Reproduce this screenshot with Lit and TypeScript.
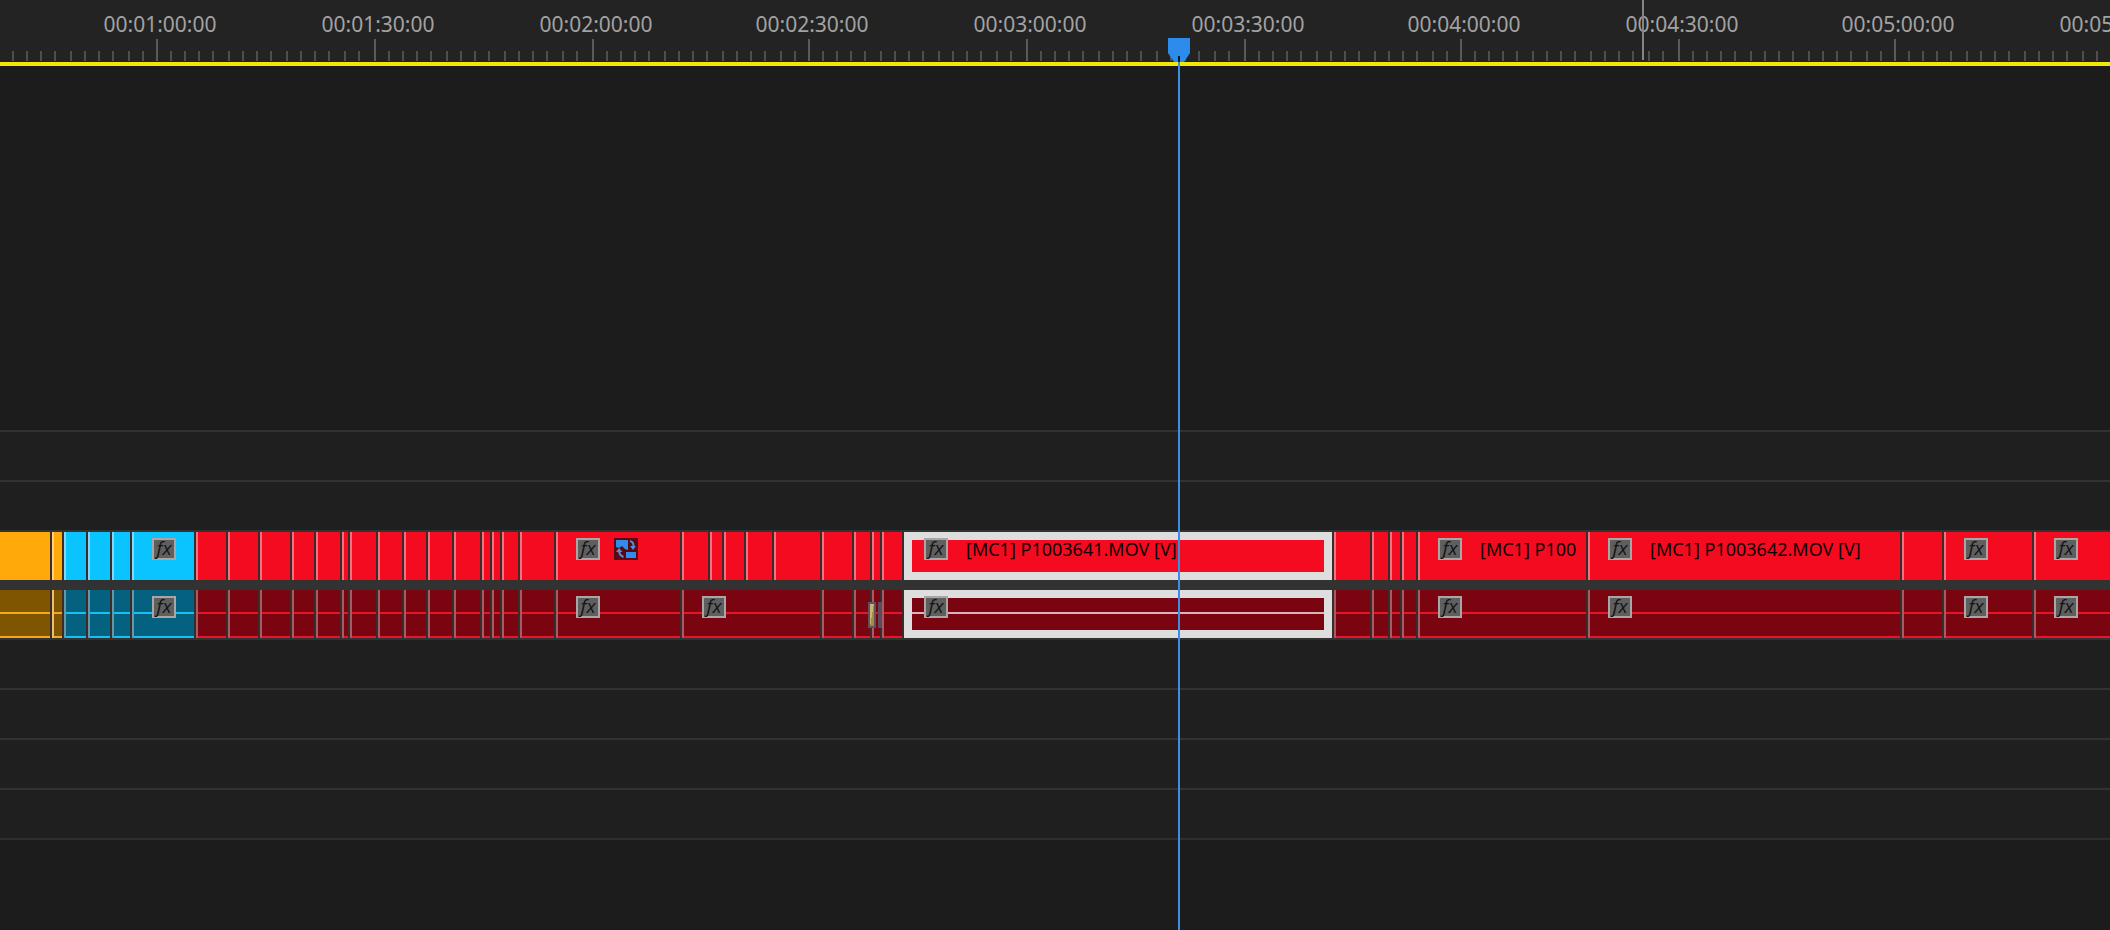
import { LitElement, html, svg, css, nothing } from "lit";
import { customElement, property } from "lit/decorators.js";
import { styleMap } from "lit/directives/style-map.js";

type Tone = "amber" | "cyan" | "red";

interface Clip {
  width: number; // 0 = takes the rest of the track
  tone: Tone;
  fx?: boolean;
  nested?: boolean;
  title?: string;
  selected?: boolean;
  continued?: boolean;
}

const clip = (width: number, tone: Tone, extra: Partial<Clip> = {}): Clip => ({ width, tone, ...extra });
const reds = (...widths: number[]): Clip[] => widths.map((w) => clip(w, "red"));

const OPENING: Clip[] = [
  clip(52, "amber", { continued: true }),
  clip(12, "amber"),
  clip(24, "cyan"),
  clip(24, "cyan"),
  clip(20, "cyan"),
  clip(64, "cyan", { fx: true }),
  ...reds(32, 32, 32, 24, 26, 8, 28, 26, 24, 26, 28, 10, 10, 18, 36),
];

const VIDEO: Clip[] = [
  ...OPENING,
  clip(126, "red", { fx: true, nested: true }),
  ...reds(28, 14, 22, 28, 48, 32, 18, 10, 22),
  clip(430, "red", { fx: true, selected: true, title: "[MC1] P1003641.MOV [V]" }),
  ...reds(38, 18, 12, 16),
  clip(170, "red", { fx: true, title: "[MC1] P100" }),
  clip(314, "red", { fx: true, title: "[MC1] P1003642.MOV [V]" }),
  ...reds(42),
  clip(90, "red", { fx: true }),
  clip(0, "red", { fx: true }),
];

const AUDIO: Clip[] = [
  ...OPENING,
  clip(126, "red", { fx: true }),
  clip(140, "red", { fx: true }),
  ...reds(32, 18, 10, 22),
  clip(430, "red", { fx: true, selected: true }),
  ...reds(38, 18, 12, 16),
  clip(170, "red", { fx: true }),
  clip(314, "red", { fx: true }),
  ...reds(42),
  clip(90, "red", { fx: true }),
  clip(0, "red", { fx: true }),
];

const PX_PER_MARK = 217.25;
const FIRST_MARK = 156.8;
const MINOR_PER_MARK = 15;

const pad = (n: number) => String(n).padStart(2, "0");
const timecode = (seconds: number) => `00:${pad(Math.floor(seconds / 60))}:${pad(seconds % 60)}:00`;

@customElement("time-ruler")
export class TimeRuler extends LitElement {
  static styles = css`
    :host {
      display: block;
      position: relative;
      height: 62px;
      overflow: hidden;
      background: #232323;
      border-bottom: 4px solid #f3e708;
    }
    .ticks {
      display: block;
      width: 100%;
      height: 61px;
    }
    .major {
      fill: #5a5a5a;
    }
    .minor {
      fill: #4e4e4e;
    }
    .label {
      position: absolute;
      top: 10px;
      width: 120px;
      margin-left: -60px;
      text-align: center;
      font-size: 21px;
      line-height: 28px;
      color: #a2a2a2;
    }
    .marker {
      position: absolute;
      top: 0;
      width: 2px;
      height: 60px;
      background: #858585;
    }
  `;

  @property({ type: Number }) marker = 0;

  private readonly onResize = () => this.requestUpdate();

  connectedCallback() {
    super.connectedCallback();
    window.addEventListener("resize", this.onResize);
  }

  disconnectedCallback() {
    window.removeEventListener("resize", this.onResize);
    super.disconnectedCallback();
  }

  render() {
    const count = Math.ceil(window.innerWidth / PX_PER_MARK) + 1;
    const marks = Array.from({ length: count }, (_, i) => ({
      x: Math.round((FIRST_MARK + (i - 1) * PX_PER_MARK) / 2) * 2,
      time: timecode((i + 1) * 30),
    }));
    const step = PX_PER_MARK / MINOR_PER_MARK;
    return html`
      <svg class="ticks" aria-hidden="true">
        ${marks.map(
          (m) => svg`
            <rect class="major" x=${m.x} y="39" width="2" height="22"></rect>
            ${Array.from(
              { length: MINOR_PER_MARK - 1 },
              (_, k) => svg`<rect class="minor" x=${Math.floor((m.x + step * (k + 1)) / 2) * 2} y="51" width="2" height="10"></rect>`,
            )}`,
        )}
      </svg>
      ${marks
        .filter((m) => m.x - 54 < window.innerWidth)
        .map((m) => html`<span class="label" style=${styleMap({ left: `${m.x + 4}px` })}>${m.time}</span>`)}
      <div class="marker" style=${styleMap({ left: `${this.marker}px` })}></div>
    `;
  }
}

@customElement("clip-track")
export class ClipTrack extends LitElement {
  static styles = css`
    :host {
      display: block;
      position: relative;
      height: 48px;
      overflow: hidden;
    }
    .row {
      display: flex;
      height: 100%;
    }
    .clip {
      box-sizing: border-box;
      flex: none;
      display: flex;
      align-items: flex-start;
      padding: 6px 0 0 18px;
      border-left: 2px solid;
      border-right: 2px solid #3a2b2d;
      overflow: hidden;
      white-space: nowrap;
    }
    .rest {
      flex: 1;
      border-right: 0;
    }
    .short {
      padding-left: 0;
    }
    .video .amber { background: #ffaa0a; border-left-color: #ffd080; }
    .video .cyan { background: #0ac4ff; border-left-color: #85d8f5; }
    .video .red { background: #f50b20; border-left-color: #f2737d; }
    .audio .clip {
      background-image: linear-gradient(var(--line), var(--line)), linear-gradient(var(--line), var(--line));
      background-size: 100% 2px;
      background-position: 0 22px, 0 46px;
      background-repeat: no-repeat;
    }
    .audio .amber { --line: #f5a818; background-color: #805502; border-left-color: #edbf6c; }
    .audio .cyan { --line: #12c2f7; background-color: #056180; border-left-color: #6599aa; }
    .audio .red { --line: #e81427; background-color: #7a0510; border-left-color: #a55c63; }
    .row .continued {
      border-left: 0;
    }
    .row .selected {
      border-left: 0;
      padding-left: 20px;
      box-shadow: inset 0 0 0 8px #dedede;
    }
    .audio .selected {
      --line: #d9b4b8;
      background-size: 100% 2px, 0 0;
    }
    .fx {
      box-sizing: border-box;
      flex: none;
      width: 24px;
      height: 22px;
      border: 2px solid #aba6a6;
      background: #5f5f5f;
      color: #141414;
      font: italic 400 19px/17px "Open Sans", "Noto Sans", sans-serif;
      text-align: center;
    }
    .nested {
      flex: none;
      margin-left: 14px;
    }
    .title {
      margin-top: -1px;
      margin-left: 18px;
      font-size: 18px;
      line-height: 24px;
      color: #100002;
    }
    .fade {
      box-sizing: border-box;
      position: absolute;
      top: 12px;
      left: 868px;
      width: 8px;
      height: 26px;
      border: 2px solid #625061;
      background: linear-gradient(100deg, #c6b676 50%, #a38c3e 50%);
    }
    .tail {
      position: absolute;
      top: 12px;
      left: 878px;
      width: 4px;
      height: 26px;
      background: #5c4a5e;
    }
  `;

  @property({ attribute: false }) clips: Clip[] = [];
  @property() kind: "video" | "audio" = "video";

  private renderClip(c: Clip) {
    const classes = ["clip", c.tone];
    if (c.continued) classes.push("continued");
    if (c.selected) classes.push("selected");
    if (!c.width) classes.push("rest");
    if (!c.fx) classes.push("short");
    return html`
      <div class=${classes.join(" ")} style=${c.width ? styleMap({ width: `${c.width}px` }) : nothing}>
        ${c.fx ? html`<span class="fx">fx</span>` : nothing}
        ${c.nested
          ? html`<svg class="nested" width="24" height="22" viewBox="0 0 24 22" aria-hidden="true">
              <rect width="24" height="22" fill="#5a0812"></rect>
              <path d="M2 2h12v10l-3-1-3-3-3 2-3-1z" fill="#2f8ceb"></path>
              <path d="M12 14h10v6H12z" fill="#2f8ceb"></path>
              <path d="M16 3q4 1 3.500 6M5 11q-.5 6 4.500 8" fill="none" stroke="#4f8fd8" stroke-width="2"></path>
              <path d="M16 8h6l-3 4zM2 14l3-4 3.500 4z" fill="#4f8fd8"></path>
            </svg>`
          : nothing}
        ${c.title ? html`<span class="title">${c.title}</span>` : nothing}
      </div>
    `;
  }

  render() {
    return html`
      <div class="row ${this.kind}">${this.clips.map((c) => this.renderClip(c))}</div>
      ${this.kind === "audio" ? html`<div class="fade"></div><div class="tail"></div>` : nothing}
    `;
  }
}

@customElement("app-root")
export class AppRoot extends LitElement {
  static styles = css`
    :host {
      display: flex;
      flex-direction: column;
      position: relative;
      min-height: 100vh;
      overflow: hidden;
      background: #1c1c1c;
      font-family: "Noto Sans", "Open Sans", sans-serif;
    }
    .space {
      height: 364px;
    }
    .lane {
      height: 48px;
      background: #1f1f1f;
      border-top: 2px solid #323232;
    }
    .sequence {
      display: flex;
      flex-direction: column;
      gap: 10px;
      padding: 2px 0 0;
      background: #323232;
    }
    .end {
      flex: 1;
      border-top: 2px solid #2e2e2e;
    }
    .playhead {
      position: absolute;
      top: 38px;
      bottom: 0;
      left: 1168px;
      width: 22px;
    }
    .handle {
      display: block;
    }
    .stem {
      position: absolute;
      top: 24px;
      bottom: 0;
      left: 10px;
      width: 2px;
      background: #3b8ee6;
    }
  `;

  render() {
    return html`
      <time-ruler .marker=${1642}></time-ruler>
      <div class="space"></div>
      <div class="lane"></div>
      <div class="lane"></div>
      <div class="sequence">
        <clip-track kind="video" .clips=${VIDEO}></clip-track>
        <clip-track kind="audio" .clips=${AUDIO}></clip-track>
      </div>
      <div class="lane"></div>
      <div class="lane"></div>
      <div class="lane"></div>
      <div class="lane"></div>
      <div class="end"></div>
      <div class="playhead">
        <svg class="handle" width="22" height="24" viewBox="0 0 22 24" aria-hidden="true">
          <path d="M0 0h22v15l-6 9H6L0 15z" fill="#2d8ceb"></path>
          <path d="M10 18h2v6h-2z" fill="#0b1a2b"></path>
        </svg>
        <div class="stem"></div>
      </div>
    `;
  }
}
